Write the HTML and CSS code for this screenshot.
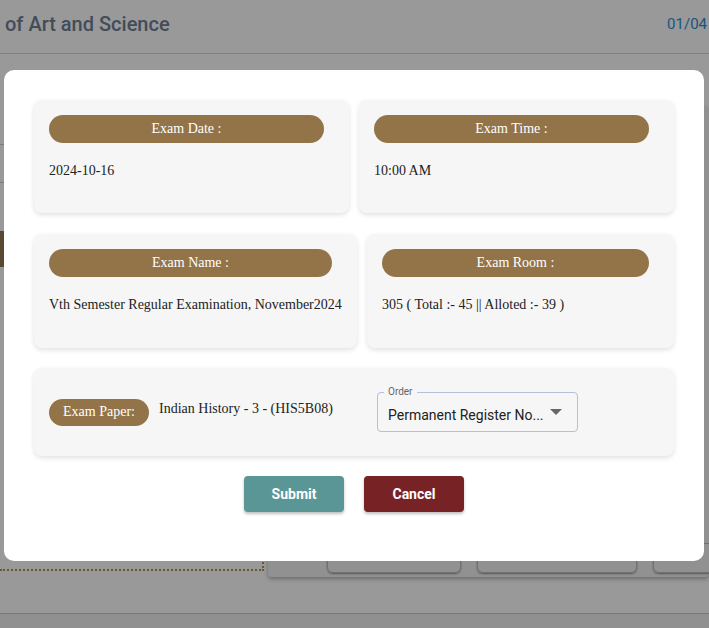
FILE: index.html
```html
<!DOCTYPE html>
<html lang="en">
<head>
<meta charset="utf-8">
<title>Exam Arrangement</title>
<link rel="stylesheet" href="styles.css">
</head>
<body>
<div class="page">
  <header class="topbar">
    <h1 class="college">of Art and Science</h1>
    <span class="date">01/04</span>
  </header>
  <div class="content">
    <div class="left-table">
      <div class="trow"></div>
      <div class="trow"></div>
      <div class="brown-tab"></div>
    </div>
    <div class="right-panel">
      <div class="pbtn b1"></div>
      <div class="pbtn b2"></div>
      <div class="pbtn b3"></div>
    </div>
  </div>
  <div class="footer-line"></div>
</div>

<div class="overlay">
  <div class="modal">
    <div class="row">
      <div class="card c-half">
        <div class="pill">Exam Date :</div>
        <div class="value">2024-10-16</div>
      </div>
      <div class="card c-half">
        <div class="pill">Exam Time :</div>
        <div class="value">10:00 AM</div>
      </div>
    </div>
    <div class="row">
      <div class="card c-name">
        <div class="pill">Exam Name :</div>
        <div class="value">Vth Semester Regular Examination, November2024</div>
      </div>
      <div class="card c-room">
        <div class="pill">Exam Room :</div>
        <div class="value">305 ( Total :- 45 || Alloted :- 39 )</div>
      </div>
    </div>
    <div class="card c-paper">
      <div class="paper-group">
        <div class="pill pill-small">Exam Paper:</div>
        <div class="paper-text">Indian History - 3 - (HIS5B08)</div>
      </div>
      <div class="select">
        <span class="select-label">Order</span>
        <span class="select-value">Permanent Register No...</span>
        <span class="caret"></span>
      </div>
    </div>
    <div class="actions">
      <button class="btn btn-submit">Submit</button>
      <button class="btn btn-cancel">Cancel</button>
    </div>
  </div>
</div>
</body>
</html>
```
FILE: styles.css
```css
* { box-sizing: border-box; }
html, body { margin: 0; padding: 0; }
body {
  width: 709px;
  height: 628px;
  overflow: hidden;
  background: #ffffff;
  font-family: "Liberation Serif", serif;
}

/* background page (under the dim overlay) */
.page { height: 628px; display: flex; flex-direction: column; }
.topbar {
  height: 54px;
  flex: 0 0 54px;
  border-bottom: 1px solid #d2d2d2;
  display: flex;
  align-items: center;
  justify-content: space-between;
  padding: 0 2px 6px 5px;
}
.college {
  margin: 0;
  font-family: "Roboto", sans-serif;
  font-weight: 500;
  font-size: 20px;
  color: #6f7f96;
}
.date {
  font-family: "Roboto", sans-serif;
  font-size: 15px;
  color: #2e8fd0;
}
.content {
  flex: 0 0 523px;
  display: flex;
  padding-top: 53px;
}
.left-table {
  flex: 0 0 264px;
  border-right: 2px dotted #b8924a;
  border-bottom: 2px dotted #b8924a;
  height: 464px;
  display: flex;
  flex-direction: column;
}
.trow { height: 38px; border-bottom: 1px solid #c8cde0; }
.brown-tab { width: 8px; height: 36px; margin-top: 48px; background: #957a55; }
.right-panel {
  flex: 1;
  min-width: 0;
  overflow: hidden;
  margin-left: 4px;
  height: 470px;
  background: #f2f2f2;
  border-radius: 4px;
  box-shadow: 0 2px 4px rgba(0,0,0,0.3);
  display: flex;
  align-items: flex-end;
  gap: 16px;
  padding: 0 0 4px 59px;
}
.pbtn { flex: 0 0 auto; height: 30px; border: 1px solid #bbb; border-radius: 6px; box-shadow: 0 1px 2px rgba(0,0,0,0.4); }
.b1 { width: 134px; }
.b2 { width: 160px; }
.b3 { width: 80px; }
.footer-line { border-top: 1px solid #c8c8c8; flex: 1; background: #f0f0f0; margin-top: 36px; }

/* overlay + modal */
.overlay {
  position: fixed;
  inset: 0;
  background: rgba(0,0,0,0.4);
  display: flex;
  justify-content: flex-start;
  align-items: flex-start;
  padding: 70px 0 0 4px;
}
.modal {
  width: 700px;
  height: 491px;
  background: #ffffff;
  border-radius: 10px;
  padding: 30px 30px 49px;
  display: flex;
  flex-direction: column;
}
.row { display: flex; gap: 10px; margin-bottom: 21px; }
.row + .row { margin-bottom: 20px; }
.card {
  min-width: 0;
  background: #f6f6f6;
  border-radius: 8px;
  box-shadow: 0 2px 5px rgba(0,0,0,0.12);
  padding: 15px 25px 15px 15px;
}
.c-half { flex: 0 0 315px; height: 113px; }
.c-name { flex: 0 0 323px; height: 114px; }
.c-room { flex: 0 0 307px; height: 114px; }
.pill {
  height: 28px;
  border-radius: 14px;
  background: #937449;
  color: #ffffff;
  font-size: 14px;
  display: flex;
  align-items: center;
  justify-content: center;
}
.value {
  margin-top: 20px;
  font-size: 14px;
  line-height: 16px;
  color: #222222;
  white-space: nowrap;
}
.c-paper {
  height: 88px;
  display: flex;
  align-items: center;
  padding: 0 15px;
}
.paper-group {
  flex: 0 0 328px;
  display: flex;
  align-items: center;
  gap: 10px;
}
.pill-small { width: 100px; height: 27px; }
.paper-text {
  font-size: 14px;
  color: #222222;
  margin-top: -7px;
}
.select {
  position: relative;
  width: 201px;
  height: 40px;
  border: 1px solid #b3c0da;
  border-radius: 4px;
  display: flex;
  align-items: center;
  padding: 0 10px;
  font-family: "Roboto", sans-serif;
  margin-top: -1px;
}
.select-label {
  position: absolute;
  left: 6px;
  top: -7px;
  padding: 0 4px;
  background: #f6f6f6;
  font-size: 10px;
  line-height: 12px;
  color: #666666;
}
.select-value {
  font-size: 14px;
  color: #222222;
  margin-top: 6px;
}
.caret {
  position: absolute;
  right: 15px;
  top: 16px;
  width: 0;
  height: 0;
  border-left: 6px solid transparent;
  border-right: 6px solid transparent;
  border-top: 6px solid #666666;
}
.actions {
  margin-top: 20px;
  display: flex;
  justify-content: center;
  gap: 20px;
}
.btn {
  width: 100px;
  height: 36px;
  border: none;
  border-radius: 4px;
  color: #ffffff;
  font-family: "Roboto", sans-serif;
  font-weight: 700;
  font-size: 14px;
  box-shadow: 0 2px 3px rgba(0,0,0,0.25);
}
.btn-submit { background: #5b9697; }
.btn-cancel { background: #772325; }
```
